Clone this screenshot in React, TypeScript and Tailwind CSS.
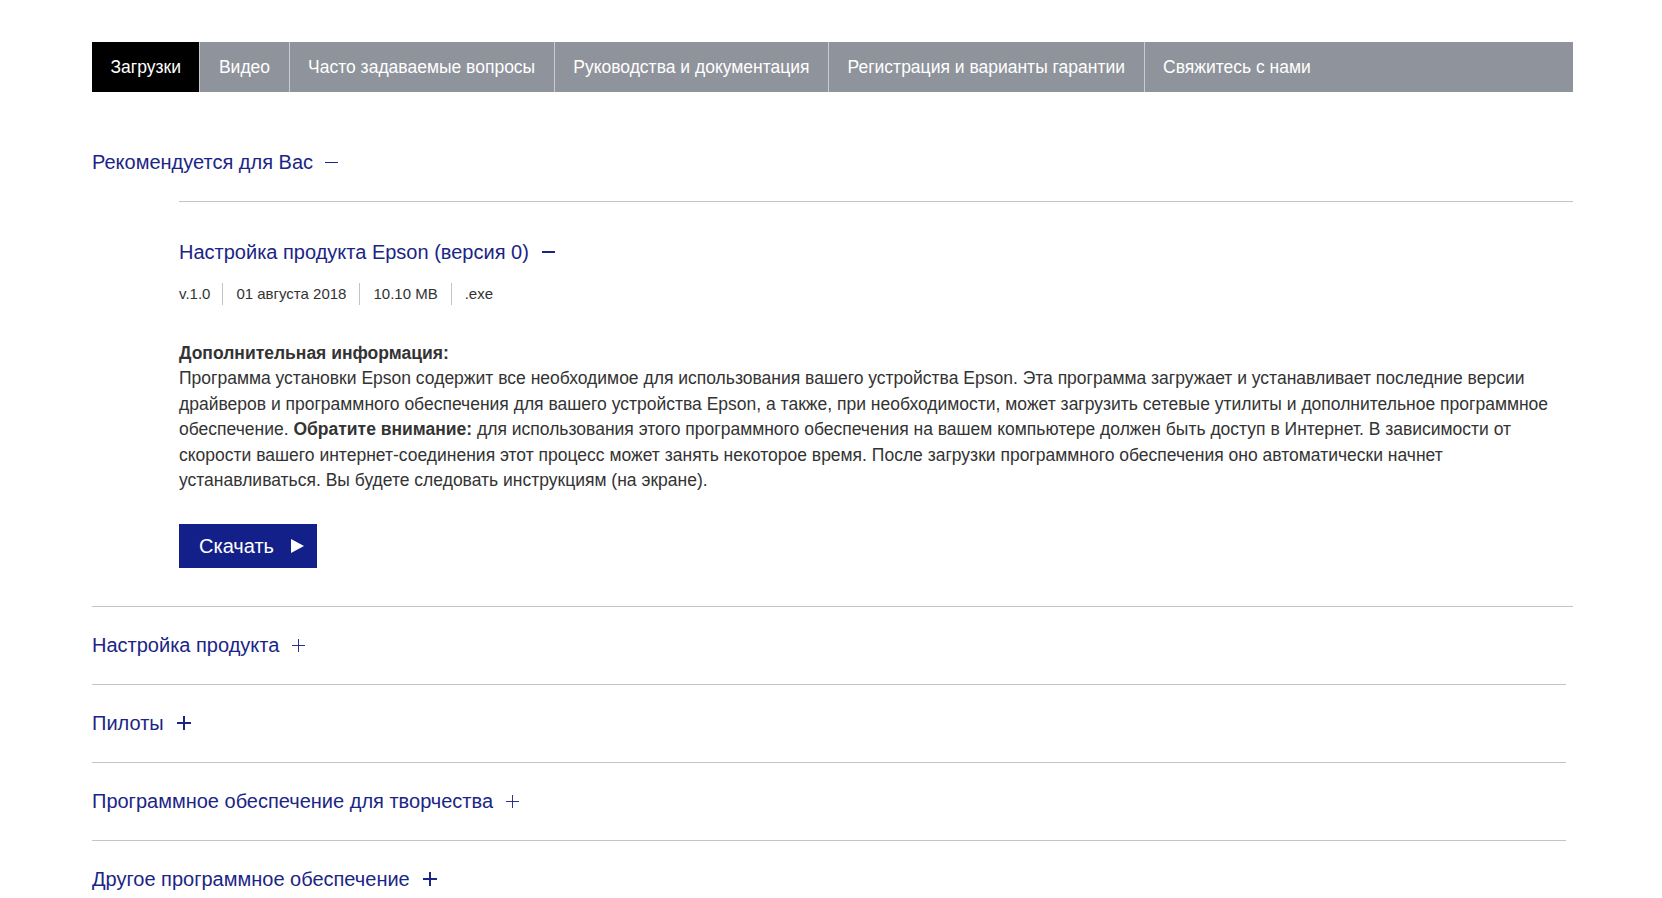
import React from "react";

const BLUE = "text-[#1b2586]";

function Minus({ bold }: { bold?: boolean }) {
  return (
    <span className={`inline-block w-[13px] ${bold ? "h-[2px]" : "h-[1px]"} bg-[#1b2586]`} />
  );
}

function Plus({ bold }: { bold?: boolean }) {
  return (
    <svg width={bold ? 14 : 13} height={bold ? 14 : 13} viewBox="0 0 14 14" className="shrink-0">
      <rect x="0" y={bold ? 6 : 6.5} width="14" height={bold ? 2 : 1} fill="#1b2586" />
      <rect x={bold ? 6 : 6.5} y="0" width={bold ? 2 : 1} height="14" fill="#1b2586" />
    </svg>
  );
}

const tabs = [
  "Загрузки",
  "Видео",
  "Часто задаваемые вопросы",
  "Руководства и документация",
  "Регистрация и варианты гарантии",
  "Свяжитесь с нами",
];

function Section({ title, bold }: { title: string; bold?: boolean }) {
  return (
    <div className="w-[1474px] border-b border-[#c4c4c4] pt-[26px] pb-[27px]">
      <div className={`flex items-center gap-[13px] text-[20px] leading-[24px] ${BLUE}`}>
        <span>{title}</span>
        <Plus bold={bold} />
      </div>
    </div>
  );
}

export default function App() {
  return (
    <div
      className="min-h-[898px] w-[1662px] bg-white"
      style={{ fontFamily: '"Liberation Sans", Arial, sans-serif' }}
    >
      <div className="ml-[92px] w-[1481px] pt-[42px]">
        {/* Tabs */}
        <div className="flex h-[50px] bg-[#8f939b] text-[17.5px] text-white">
          {tabs.map((t, i) => (
            <div
              key={t}
              className={`flex items-center px-[18.5px] ${
                i === 0 ? "bg-black" : "border-l border-[#c8cbd0]"
              }`}
            >
              {t}
            </div>
          ))}
        </div>

        {/* Recommended */}
        <div className="border-b border-[#c4c4c4] pt-[58px] pb-[38px]">
          <div className={`flex items-center gap-[12px] text-[20px] leading-[24px] ${BLUE}`}>
            <span>Рекомендуется для Вас</span>
            <Minus />
          </div>
          <div className="ml-[87px] mt-[27px] border-t border-[#c4c4c4] pt-[38px]">
            <div className={`flex items-center gap-[13px] text-[20px] leading-[24px] ${BLUE}`}>
              <span>Настройка продукта Epson (версия 0)</span>
              <Minus bold />
            </div>
            <div className="mt-[19px] flex h-[22px] items-center text-[15px] leading-[22px] text-[#333]">
              <span className="pr-[12px]">v.1.0</span>
              <span className="border-l border-[#c4c4c4] px-[13px]">01 августа 2018</span>
              <span className="border-l border-[#c4c4c4] px-[13px]">10.10 MB</span>
              <span className="border-l border-[#c4c4c4] pl-[13px]">.exe</span>
            </div>
            <div className="mt-[36px] text-[17.5px] leading-[25.4px] text-[#333]">
              <div className="font-bold">Дополнительная информация:</div>
              <p className="whitespace-nowrap">
                Программа установки Epson содержит все необходимое для использования вашего устройства Epson. Эта программа загружает и устанавливает последние версии
                <br />
                драйверов и программного обеспечения для вашего устройства Epson, а также, при необходимости, может загрузить сетевые утилиты и дополнительное программное
                <br />
                обеспечение. <b>Обратите внимание:</b> для использования этого программного обеспечения на вашем компьютере должен быть доступ в Интернет. В зависимости от
                <br />
                скорости вашего интернет-соединения этот процесс может занять некоторое время. После загрузки программного обеспечения оно автоматически начнет
                <br />
                устанавливаться. Вы будете следовать инструкциям (на экране).
              </p>
            </div>
            <button className="mt-[31px] flex h-[44px] w-[138px] items-center bg-[#13208a] pl-[20px] text-[20px] text-white">
              <span>Скачать</span>
              <svg width="13" height="14" viewBox="0 0 13 14" className="ml-[17px]">
                <polygon points="0,0 13,7 0,14" fill="white" />
              </svg>
            </button>
          </div>
        </div>

        <Section title="Настройка продукта" />
        <Section title="Пилоты" bold />
        <Section title="Программное обеспечение для творчества" />
        <Section title="Другое программное обеспечение" bold />
      </div>
    </div>
  );
}
